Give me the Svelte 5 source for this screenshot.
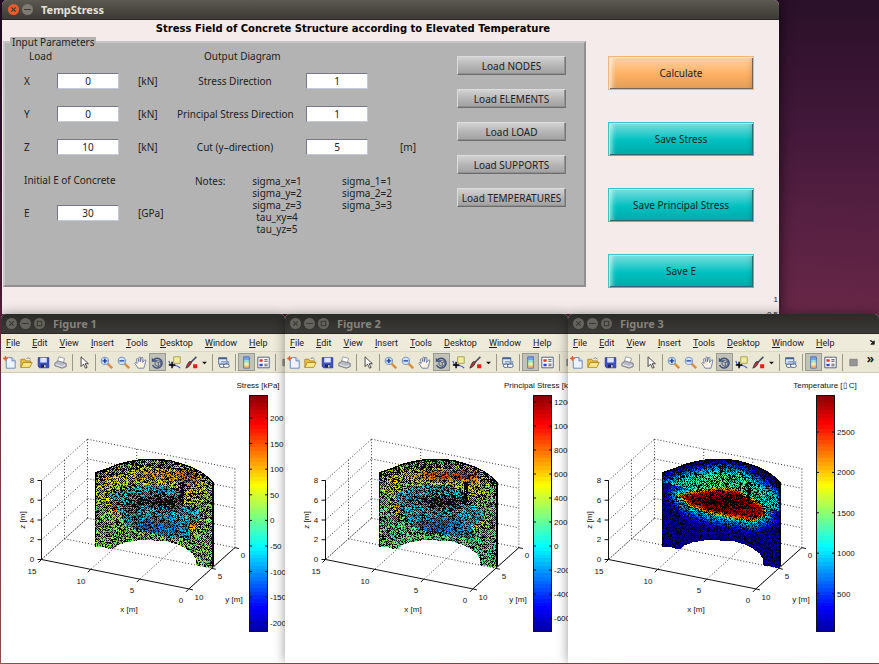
<script lang="ts">
	type Point = [number, number]
	type Figure = {
		id: number
		title: string
		labels: string[]
		first: number
		step: number
		slab: Point[]
		extra?: boolean
	}

	const menu = ['File', 'Edit', 'View', 'Insert', 'Tools', 'Desktop', 'Window', 'Help']
	const tools = ['new', 'open', 'save', 'print', '|', 'pointer', '|', 'zoom in', 'zoom out', 'pan', 'rotate', 'data cursor', 'brush', 'caret', '|', 'link', '|', 'colorbar', 'legend', '|', 'hide']

	let loads = $state([
		{ name: 'X', value: '0' },
		{ name: 'Y', value: '0' },
		{ name: 'Z', value: '10' }
	])
	let young = $state('30')
	let outputs = $state([
		{ name: 'Stress Direction', value: '1', unit: '' },
		{ name: 'Principal Stress Direction', value: '1', unit: '' },
		{ name: 'Cut (y–direction)', value: '5', unit: '[m]' }
	])

	const loaders = ['NODES', 'ELEMENTS', 'LOAD', 'SUPPORTS', 'TEMPERATURES']
	const notes = ['sigma_x=1', 'sigma_y=2', 'sigma_z=3', 'tau_xy=4', 'tau_yz=5']
	const principalNotes = ['sigma_1=1', 'sigma_2=2', 'sigma_3=3']

	const stressSlab: Point[] = [[108, 119], [126, 114], [146, 110], [166, 112], [181, 119], [181, 130], [199, 134], [199, 145], [186, 151], [191, 165], [166, 162], [142, 157], [126, 152], [117, 137]]
	const heatSlab: Point[] = [[110, 121], [126, 117], [150, 114], [168, 115], [182, 124], [196, 132], [196, 141], [184, 146], [165, 143], [140, 138], [122, 131]]

	const figures: Figure[] = [
		{ id: 1, title: 'Stress [kPa]', labels: ['200', '150', '100', '50', '0', '-50', '-100', '-150', '-200'], first: 44, step: 25.6, slab: stressSlab },
		{ id: 2, title: 'Principal Stress [kPa]', labels: ['1200', '1000', '800', '600', '400', '200', '0', '-200', '-400', '-600'], first: 28, step: 24, slab: stressSlab },
		{ id: 3, title: 'Temperature [▯ C]', labels: ['2500', '2000', '1500', '1000', '500'], first: 58, step: 40.4, slab: heatSlab, extra: true }
	]

	// outline of the cut cylinder
	const top: Point[] = [[94, 98], [106, 94], [116, 90], [127, 87], [139, 85], [159, 85], [169, 86], [179, 89], [191, 93], [199, 97], [207, 103], [213, 109]]
	const bottom: Point[] = [[94, 173], [103, 173], [106, 174], [111, 175], [116, 171], [124, 168], [136, 166], [151, 166], [166, 167], [176, 170], [184, 174], [191, 179], [194, 184], [195, 191], [202, 192], [210, 194], [213, 191]]

	const clamp = (v: number) => Math.max(0, Math.min(1, v))

	const jet = (v: number, light = 1) => {
		const c = (k: number) => Math.round(255 * light * clamp(1.5 - Math.abs(4 * v - k)))
		return `rgb(${c(3)},${c(2)},${c(1)})`
	}

	const at = (line: Point[], x: number) => {
		for (let i = 1; i < line.length; i++) {
			const [x0, y0] = line[i - 1]
			const [x1, y1] = line[i]
			if (x <= x1) return y0 + ((y1 - y0) * (x - x0)) / (x1 - x0)
		}
		return line[line.length - 1][1]
	}

	// signed distance to a polygon, negative inside
	const distance = (poly: Point[], x: number, y: number) => {
		let best = 1e9
		let inside = false
		poly.forEach(([bx, by], i) => {
			const [ax, ay] = poly[(i + poly.length - 1) % poly.length]
			const t = clamp(((x - ax) * (bx - ax) + (y - ay) * (by - ay)) / ((bx - ax) ** 2 + (by - ay) ** 2))
			best = Math.min(best, Math.hypot(x - ax - t * (bx - ax), y - ay - t * (by - ay)))
			if (ay > y !== by > y && x < ((bx - ax) * (y - ay)) / (by - ay) + ax) inside = !inside
		})
		return inside ? -best : best
	}

	const bump = (x: number, y: number, cx: number, cy: number, rx: number, ry: number) =>
		Math.exp(-(((x - cx) / rx) ** 2) - ((y - cy) / ry) ** 2)

	const field = (fig: Figure, x: number, y: number) => {
		const d = distance(fig.slab, x, y)
		if (fig.id === 3) {
			if (d < -3) return 0.95
			if (d < 1) return 0.86 - (d + 3) * 0.06
			const above = y < 112 + (x - 110) * 0.25
			return above ? 0.48 - Math.max(0, d - 13) * 0.025 - Math.abs(x - 152) * 0.0015 : 0.43 - d * 0.027
		}
		if (d < 0) return 0.36 - 0.11 * bump(x, y, 155, 153, 28, 10)
		const hot = fig.id === 1 ? 0.19 : 0.32
		return (
			0.48 +
			hot * bump(x, y, 155, 101, 36, 8) +
			0.16 * bump(x, y, 188, 108, 15, 22) +
			0.14 * bump(x, y, 106, 110, 10, 18) +
			0.26 * bump(x, y, 114, 133, 6, 7) +
			0.24 * bump(x, y, 191, 149, 7, 6) +
			(fig.id === 1 ? 0.04 : 0)
		)
	}

	const shade = (x: number, y: number) => {
		if (x > 210) return 2
		const rim = y - at(top, x)
		if (rim < 1) return 2
		if (x < 95) return 1
		let p = 0.42
		if (rim < 9) p = 0.62
		p += 0.5 * bump(x, y, 156, 127, 27, 7)
		if (x > 178 && x < 183 && y > 107 && y < 132) p = 1
		return p
	}

	const mesh = (fig: Figure) => {
		let seed = 17 * fig.id
		const random = () => {
			seed = (seed * 1664525 + 1013904223) % 4294967296
			return seed / 4294967296
		}
		const paths = new Map<string, string>()
		for (let x = 94; x < 213; x++) {
			for (let y = Math.round(at(top, x)); y < at(bottom, x); y++) {
				const noise = (random() - 0.5) * 0.1
				const edge = shade(x, y) + ((x + y) % 2 ? 0.2 : -0.2)
				let colour = '#000'
				if (random() > edge) {
					const v = clamp(field(fig, x, y) + noise)
					colour = jet(Math.max(0.04, Math.round(v * 28) / 28), random() > 0.5 ? 0.95 : 0.65)
				}
				paths.set(colour, (paths.get(colour) ?? '') + `M${x} ${y}h1v1h-1z`)
			}
		}
		return [...paths]
	}

	// axes projection: x 0..15, y 0..10, z 0..8
	const p = (x: number, y: number, z: number) =>
		`${(40.5 + (15 - x) * 9.83 + (10 - y) * 4.6).toFixed(1)} ${(185.5 + (15 - x) * 1.96 - (10 - y) * 4.13 - z * 9.88).toFixed(1)}`

	const line = (a: number[], b: number[]) => `M${p(a[0], a[1], a[2])}L${p(b[0], b[1], b[2])}`

	let grid = ''
	for (const z of [0, 2, 4, 6, 8]) grid += line([15, 10, z], [15, 0, z]) + line([15, 0, z], [0, 0, z])
	for (const x of [0, 5, 10, 15]) grid += line([x, 0, 0], [x, 0, 8]) + line([x, 0, 0], [x, 10, 0])
	grid += line([15, 5, 0], [15, 5, 8]) + line([15, 5, 0], [0, 5, 0])

	let axes = line([15, 10, 8], [15, 10, 0]) + line([15, 10, 0], [0, 10, 0]) + line([0, 10, 0], [0, 0, 0])
	for (const z of [0, 2, 4, 6, 8]) axes += `M${p(15, 10, z)}h-4`
	for (const x of [0, 5, 10, 15]) axes += `M${p(x, 10, 0)}l-3 3`
	for (const y of [0, 5, 10]) axes += `M${p(0, y, 0)}l4 1`

	const ticks: [string, number, number][] = [
		['8', 31, 109], ['6', 31, 129], ['4', 31, 149], ['2', 31, 168], ['0', 31, 188],
		['15', 31, 200], ['10', 80, 210], ['5', 131, 219], ['0', 180, 229],
		['10', 198, 226], ['5', 219, 205], ['0', 242, 184],
		['x [m]', 128, 238], ['y [m]', 233, 228]
	]
</script>

{#snippet icon(name: string)}
	<svg class="icon" viewBox="0 0 16 16" aria-hidden="true">
		{#if name === 'new'}
			<path d="M4 2h7l4 4v9H4z" fill="#eef4ff" stroke="#5577b0" />
			<path d="M11 2v4h4" fill="#cfdcf5" stroke="#5577b0" />
			<circle cx="3" cy="3" r="2.4" fill="#f08a5a" /><path d="M3 0v6M0 3h6" stroke="#d9542c" />
		{:else if name === 'open'}
			<path d="M1 14V4h5l1 2h6v3" fill="#e8c040" stroke="#a8801c" />
			<path d="M1 14l3-6h11l-3 6z" fill="#fbe68a" stroke="#a8801c" />
			<path d="M8 3q3-2 5 1" fill="none" stroke="#6a7a98" />
		{:else if name === 'save'}
			<path d="M1.500 2h13v12.500H3l-1.500-2z" fill="#3c50c8" stroke="#2a3690" />
			<path d="M4 2h8v6H4z" fill="#dde6fa" /><path d="M5 10.500h6V14H5z" fill="#20284c" /><path d="M9 11h1.500v3H9z" fill="#fff" />
		{:else if name === 'print'}
			<path d="M4 7l2-6 7 2-1.500 5" fill="#fff" stroke="#8890a0" />
			<path d="M1 9l4-3 10 3v4l-5 2-9-3z" fill="#b6bac4" stroke="#6c7078" />
			<path d="M2 10.500l8 2.500 4-2" fill="none" stroke="#f8f8f8" />
		{:else if name === 'pointer'}
			<path d="M5 1v12l3-3 2.500 5 2-1-2.500-4.500h4z" fill="#fff" stroke="#222" />
		{:else if name === 'zoom in' || name === 'zoom out'}
			<path d="M9 9l6 6" stroke="#d89040" stroke-width="3" />
			<circle cx="6" cy="6" r="4.500" fill="#cfe4fa" stroke="#7c9cc8" stroke-width="1.400" />
			<path d={name === 'zoom in' ? 'M3 6h6M6 3v6' : 'M3 6h6'} stroke="#1c3c9c" stroke-width="1.800" />
		{:else if name === 'pan'}
			<path d="M5 15L1 9q0-2 3 0L3 4q1-2 2 0l1 3V2q1.500-2 2 0v5l1-5q2-1 2 1l-.5 5L13 5q2-1 1.500 1L13 12l-1 3z" fill="#fff3e2" stroke="#5a6c9c" />
		{:else if name === 'rotate'}
			<path d="M3 5a6 6 0 1 1-1 6" fill="none" stroke="#3c5078" stroke-width="1.800" />
			<path d="M1 2v5h5z" fill="#3c5078" /><path d="M5 6l4-1 3 2v4l-3 2-4-2zM5 6l4 2v5M9 8l3-1" fill="none" stroke="#3c5078" />
		{:else if name === 'data cursor'}
			<path d="M7 1h8v8H7z" fill="#f2eca0" stroke="#9a9440" />
			<path d="M1 6q2 7 6 6t8 3" fill="none" stroke="#3848c8" stroke-width="1.300" />
			<path d="M5 7v8M1 11h8" stroke="#000" stroke-width="1.800" />
		{:else if name === 'brush'}
			<path d="M14 1L7 8" stroke="#44506c" stroke-width="2" />
			<path d="M8 7q-1 6-7 8 2-6 4-8z" fill="#b83030" stroke="#303850" />
			<path d="M10 10h5v5h-5z" fill="#f01818" />
		{:else if name === 'link'}
			<path d="M2 2h10v8H2z" fill="#dfe9fa" /><path d="M2 2h10v8H2z" fill="none" stroke="#47618f" /><path d="M2 3h10" stroke="#47618f" stroke-width="2" />
			<path d="M5 7h9v3" fill="none" stroke="#8aa0c8" stroke-width="2" />
			<rect x="3" y="10" width="6" height="4" rx="2" fill="#fff" stroke="#334a78" /><rect x="8" y="10" width="7" height="4" rx="2" fill="#fff" stroke="#334a78" />
		{:else if name === 'colorbar'}
			<path d="M5 1h7v4H5z" fill="#78a4ee" /><path d="M5 5h7v3H5z" fill="#8ee4e0" /><path d="M5 8h7v4H5z" fill="#f4ee9c" /><path d="M5 12h7v3H5z" fill="#f8b878" />
			<path d="M4.500 1h7v14h-7z" fill="none" stroke="#4868a8" />
		{:else if name === 'legend'}
			<path d="M1 1.500h14v13H1z" fill="#fff" stroke="#33456c" />
			<path d="M3 4h4v3H3z" fill="#e03030" /><path d="M3 9.500h4v3H3z" fill="#3048d0" /><path d="M9 4.500h4M9 6.500h4M9 10h4M9 12h4" stroke="#333" />
		{:else if name === 'caret'}
			<path d="M5 7h6l-3 3z" fill="#111" />
		{:else}
			<path d="M3.500 4h9v8h-9z" fill="#969696" stroke="#7a7a7a" />
		{/if}
	</svg>
{/snippet}

<main class="desktop">
	<section class="window app">
		<header class="titlebar">
			<button class="dot close" aria-label="Close"><svg viewBox="0 0 10 10"><path d="M3 3l4 4M7 3l-4 4" /></svg></button>
			<button class="dot" aria-label="Minimize"><svg viewBox="0 0 10 10"><path d="M2 5h6" /></svg></button>
			<span>TempStress</span>
		</header>
		<h1>Stress Field of Concrete Structure according to Elevated Temperature</h1>

		<div class="body">
			<fieldset>
				<legend>Input Parameters</legend>
				<div class="panel">
					<div class="group load">
						<div class="heading">Load</div>
						{#each loads as row}
							<label for="load-{row.name}">{row.name}</label>
							<input id="load-{row.name}" bind:value={row.value} />
							<span>[kN]</span>
						{/each}
						<div class="wide">Initial E of Concrete</div>
						<label for="young">E</label>
						<input id="young" bind:value={young} />
						<span>[GPa]</span>
					</div>

					<div class="group output">
						<div class="heading">Output Diagram</div>
						{#each outputs as row, i}
							<label for="output-{i}">{row.name}</label>
							<input id="output-{i}" bind:value={row.value} />
							<span>{row.unit}</span>
						{/each}
						<div class="notes">
							<div>Notes:</div>
							<div>
								{#each notes as note}<div>{note}</div>{/each}
							</div>
							<div>
								{#each principalNotes as note}<div>{note}</div>{/each}
							</div>
						</div>
					</div>

					<div class="loaders">
						{#each loaders as name}
							<button>Load {name}</button>
						{/each}
					</div>
				</div>
			</fieldset>

			<div class="actions">
				<button class="calculate">Calculate</button>
				<button>Save Stress</button>
				<button>Save Principal Stress</button>
				<button>Save E</button>
			</div>

			<div class="axis">
				<div>1</div>
				<div>0.5</div>
			</div>
		</div>
	</section>

	<div class="figures">
		{#each figures as fig}
			<section class="window figure">
				<header class="titlebar inactive">
					<button class="dot" aria-label="Close"><svg viewBox="0 0 10 10"><path d="M3 3l4 4M7 3l-4 4" /></svg></button>
					<button class="dot" aria-label="Minimize"><svg viewBox="0 0 10 10"><path d="M2 5h6" /></svg></button>
					<button class="dot" aria-label="Maximize"><svg viewBox="0 0 10 10"><path d="M3 3h4v4H3z" /></svg></button>
					<span>Figure {fig.id}</span>
				</header>
				<nav>
					{#each menu as item}
						<button><u>{item[0]}</u>{item.slice(1)}</button>
					{/each}
					{#if fig.extra}
						<svg class="dock" viewBox="0 0 8 8" aria-hidden="true"><path d="M1 2q3-1 4 3M6 2v4H2z" fill="#222" stroke="#222" /></svg>
					{/if}
				</nav>
				<div class="toolbar">
					{#each tools as tool}
						{#if tool === '|'}
							<i class="sep"></i>
						{:else}
							<button
								class:pressed={tool === 'rotate' || tool === 'colorbar'}
								class:narrow={tool === 'caret'}
								aria-label={tool}
							>
								{@render icon(tool)}
							</button>
						{/if}
					{/each}
					{#if fig.extra}<button class="more">»</button>{/if}
				</div>
				<div class="plot">
					<svg width="311" height="284" viewBox="0 0 311 284">
						<path d={grid} class="grid" />
						<path d={axes} class="axes" />
						<g shape-rendering="crispEdges">
							{#each mesh(fig) as [colour, d]}
								<path {d} fill={colour} />
							{/each}
							{#each Array(64) as _, i}
								<rect x="248" y={258 - (i + 1) * 3.7} width="19" height="4" fill={jet((i + 2) / 66)} />
							{/each}
						</g>
						<rect x="248.500" y="21.500" width="18" height="236" class="axes" />
						{#each ticks as [text, x, y]}
							<text {x} {y} text-anchor="middle">{text}</text>
						{/each}
						<text transform="translate(24 146) rotate(-90)" text-anchor="middle">z [m]</text>
						<text x="257" y="14" text-anchor="middle">{fig.title}</text>
						{#each fig.labels as text, i}
							{@const y = fig.first + i * fig.step}
							<path d="M248 {y}h3M264 {y}h3" class="axes" />
							<text x="269" y={y + 3}>{text}</text>
						{/each}
					</svg>
				</div>
			</section>
		{/each}
	</div>
</main>

<style>
	:global(body) {
		margin: 0;
	}

	.desktop {
		display: flex;
		flex-direction: column;
		box-sizing: border-box;
		min-height: 100vh;
		padding: 0 0 1px 1px;
		overflow: hidden;
		font-family: "Noto Sans", "Open Sans", sans-serif;
		font-size: 10px;
		line-height: 12px;
		color: #222;
		background: linear-gradient(160deg, transparent 50%, rgba(30, 5, 30, 0.3)), linear-gradient(#2a1029, #43183a 20%, #6a2849 45%, #8f4a50 75%, #b06c62);
	}

	button {
		font: inherit;
		color: inherit;
		padding: 0;
		border: none;
		background: none;
		white-space: nowrap;
	}

	.window {
		overflow: hidden;
		border-radius: 5px 5px 0 0;
	}

	.app {
		margin: 0 100px 0 1px;
		background: #f5ebeb;
		box-shadow: 0 0 14px rgba(0, 0, 0, 0.7);
	}

	.titlebar {
		display: flex;
		align-items: center;
		gap: 3px;
		height: 20px;
		padding-left: 6px;
		box-sizing: border-box;
		background: linear-gradient(#5b584f, #3d3b37);
		border-bottom: 1px solid #282723;
		color: #e6e1d6;
		font-size: 11px;
		font-weight: bold;
	}

	.titlebar span {
		margin-left: 5px;
	}

	.titlebar .dot {
		width: 11px;
		height: 11px;
		border-radius: 50%;
		background: #7d7a71;
	}

	.dot svg {
		display: block;
		fill: none;
		stroke: #3a3833;
	}

	.titlebar .close {
		background: #ec5b30;
	}

	.inactive {
		padding-left: 5px;
		background: linear-gradient(#2a2a27, #3b3a36);
		color: #85827b;
	}

	.inactive .dot {
		background: #65635d;
	}

	h1 {
		margin: 0;
		padding-right: 75px;
		font-family: "DejaVu Sans", sans-serif;
		font-size: 10px;
		line-height: 17px;
		text-align: center;
		color: #000;
	}

	.body {
		display: grid;
		grid-template-columns: minmax(0, 1fr) 146px 25px;
		min-height: 277px;
	}

	fieldset {
		min-width: 0;
		min-height: 250px;
		box-sizing: border-box;
		margin: 0 22px 27px 1px;
		padding: 0;
		border: 2px solid;
		border-color: #c6c6c6 #909090 #909090 #c6c6c6;
		background: #b3b3b3;
	}

	legend {
		margin-left: 5px;
		padding: 0 2px;
		line-height: 10px;
		background: #b3b3b3;
	}

	.panel {
		display: flex;
	}

	.group {
		display: grid;
		grid-template-rows: 17px repeat(5, 33px);
		align-items: center;
	}

	.load {
		grid-template-columns: 33px 62px 40px;
		padding-left: 19px;
		flex: 0 0 135px;
	}

	.load span {
		padding-left: 19px;
	}

	.heading,
	.wide {
		grid-column: 1 / -1;
	}

	.load .heading {
		padding-left: 5px;
	}

	.output {
		grid-template-columns: 116px 62px minmax(0, 1fr);
		column-gap: 13px;
		flex: 1;
		padding-left: 18px;
	}

	.output label {
		text-align: center;
		white-space: nowrap;
	}

	.output .heading {
		padding-left: 27px;
	}

	.output span {
		padding-left: 19px;
	}

	.notes {
		grid-column: 1 / -1;
		grid-row: 5 / span 2;
		align-self: start;
		display: grid;
		grid-template-columns: 48px 68px 112px;
		padding: 12px 0 0 18px;
		text-align: center;
	}

	.notes > :first-child {
		text-align: left;
	}

	input {
		box-sizing: border-box;
		width: 62px;
		height: 16px;
		padding: 0;
		border: 1px solid;
		border-color: #77778a #c4c8dc #c4c8dc #77778a;
		background: #fff;
		font: inherit;
		color: inherit;
		text-align: center;
	}

	.loaders {
		display: flex;
		flex-direction: column;
		gap: 14px;
		flex: 0 0 109px;
		padding: 9px 18px 0 0;
	}

	.loaders button {
		height: 19px;
		border: 1px solid;
		border-color: #dcdcdc #77787c #6b6c70 #dcdcdc;
		box-shadow: inset -1px -1px #909090;
		background: linear-gradient(#d2d2d2, #b6b6b6 50%, #a0a0a0);
	}

	.actions {
		display: flex;
		flex-direction: column;
		gap: 32px;
		padding-top: 19px;
	}

	.actions button {
		height: 34px;
		flex: none;
		border: 1px solid #3cc4c4;
		box-shadow: inset 1px 1px #b8e4e4, inset -1px -1px #2a6c70, inset 7px 0 5px -4px rgba(255, 255, 255, 0.6), inset -6px 0 5px -4px rgba(0, 0, 0, 0.15);
		background: linear-gradient(#7adede, #00c0c0 55%, #00a8a8);
	}

	.actions .calculate {
		border-color: #f0b47c;
		box-shadow: inset 1px 1px #ffe2c4, inset -1px -1px #7a6250, inset 7px 0 5px -4px rgba(255, 255, 255, 0.7), inset -6px 0 5px -4px rgba(0, 0, 0, 0.15);
		background: linear-gradient(#ffd2a4, #ffb062 55%, #e09c58);
	}

	.axis {
		align-self: end;
		height: 22px;
		padding-right: 1px;
		overflow: hidden;
		text-align: right;
		font: 8px/15px "Liberation Sans", Arial, sans-serif;
	}

	.figures {
		flex: 1;
		display: grid;
		grid-template-columns: minmax(0, 284fr) minmax(0, 283fr) minmax(0, 311fr);
	}

	.figure {
		position: relative;
		display: flex;
		flex-direction: column;
		background: #fff;
		box-shadow: 0 0 12px rgba(0, 0, 0, 0.4);
	}

	nav {
		display: flex;
		align-items: center;
		gap: 12px;
		height: 18px;
		padding: 0 3px 0 5px;
		background: #efebda;
		border-bottom: 1px solid #dcd8c6;
		box-sizing: border-box;
		font: 9px/12px Roboto, sans-serif;
	}

	.dock {
		width: 7px;
		height: 7px;
		margin-left: auto;
	}

	.toolbar {
		display: flex;
		align-items: center;
		height: 21px;
		overflow: hidden;
		box-sizing: border-box;
		background: #ebe7d5;
		border-bottom: 1px solid #cfcbb8;
	}

	.toolbar button {
		display: flex;
		align-items: center;
		justify-content: center;
		flex: 0 0 17px;
		min-width: 0;
		box-sizing: border-box;
		height: 18px;
	}

	.toolbar .narrow {
		flex-basis: 9px;
	}

	.toolbar .pressed {
		border: 1px solid #9a9a90;
		background: #c3c2b8;
	}

	.toolbar .more {
		margin-left: auto;
		font-size: 12px;
		font-weight: bold;
		align-items: flex-start;
	}

	.icon {
		flex: none;
		width: 13px;
		height: 13px;
	}

	.sep {
		flex: 0 0 1px;
		height: 17px;
		margin: 0 2px 0 3px;
		background: #9c998a;
	}

	.plot {
		flex: 1;
		padding-top: 1px;
		overflow: hidden;
	}

	.plot svg {
		display: block;
	}

	.plot text {
		font: 8px "Liberation Sans", Arial, sans-serif;
		fill: #111;
	}

	.grid {
		fill: none;
		stroke: #333;
		stroke-dasharray: 1 2;
	}

	.axes {
		fill: none;
		stroke: #111;
	}
</style>
